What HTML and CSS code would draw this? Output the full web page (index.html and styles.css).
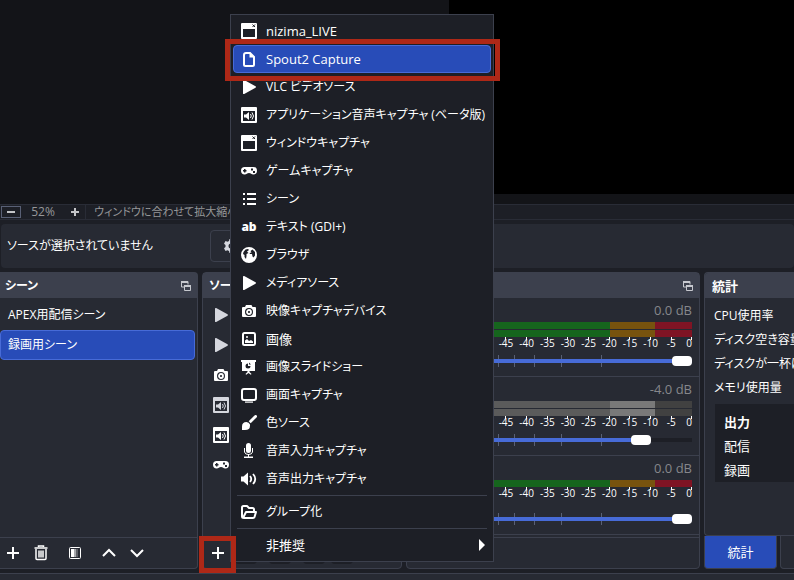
FILE: index.html
```html
<!DOCTYPE html>
<html lang="ja">
<head>
<meta charset="utf-8">
<meta name="viewport" content="width=device-width, initial-scale=1">
<title>OBS</title>
<link rel="stylesheet" href="styles.css">
</head>
<body>
<svg class="sprite" aria-hidden="true">
  <symbol id="window" viewBox="0 0 16 16"><path fill-rule="evenodd" d="M1 0h14a1 1 0 0 1 1 1v14a1 1 0 0 1-1 1H1a1 1 0 0 1-1-1V1a1 1 0 0 1 1-1zM2 6v8h12V6z"/><path d="M11.500 1.500l2.500 2.500M14 1.500l-2.500 2.500" stroke="#1d1f26" fill="none"/></symbol>
  <symbol id="file" viewBox="0 0 16 16"><path d="M5 2h4l4 4v7.500q0 1.500-1.500 1.500h-7Q3 15 3 13.500V4q0-2 2-2z" fill="none" stroke="currentColor" stroke-width="2"/><path d="M8.500 1l5.500 5.500H8.500z"/></symbol>
  <symbol id="play" viewBox="0 0 16 16"><path d="M2 1.800q0-1.200 1.200-.7L14.500 7.300q1 .7 0 1.400L3.200 14.900Q2 15.400 2 14.200z"/></symbol>
  <symbol id="appaudio" viewBox="0 0 16 16"><path fill-rule="evenodd" d="M1 0h14a1 1 0 0 1 1 1v14a1 1 0 0 1-1 1H1a1 1 0 0 1-1-1V1a1 1 0 0 1 1-1zM2 4v10h12V4z"/><path d="M3 7.500h2L8 5v8l-3-2.500H3z"/><path d="M9.500 7q1.500 2 0 4M11 5.500q3 3.500 0 7" fill="none" stroke="currentColor"/></symbol>
  <symbol id="gamepad" viewBox="0 0 16 16"><path fill-rule="evenodd" d="M3.700 4h8.600a3.700 3.700 0 0 1 0 7.400c-2 0-2.300-1.400-4.300-1.400s-2.300 1.400-4.300 1.400a3.700 3.700 0 0 1 0-7.400zM3 6v1H2v1.500h1v1h1.500v-1h1V7h-1V6zM10 5.500v2h2v-2zM12 8v2h2V8z"/></symbol>
  <symbol id="list" viewBox="0 0 16 16"><path d="M2 2h2v2H2zM6 2h9v2H6zM2 7h2v2H2zM6 7h9v2H6zM2 12h2v2H2zM6 12h9v2H6z"/></symbol>
  <symbol id="globe" viewBox="0 0 16 16"><path fill-rule="evenodd" d="M8 0a8 8 0 1 1 0 16A8 8 0 0 1 8 0zM2.500 5l2-2.500 2.500-.5 1 1-2 1.500L7.500 6 5.500 7v2L5 12l-1.500-2V8L2 7zM9.500 4l2-1.500L14 5v3.500l-1.500 2-1-1-.5-2.500L9 7 8.500 6l2-.5z"/></symbol>
  <symbol id="camera" viewBox="0 0 16 16"><path fill-rule="evenodd" d="M5 2h5.500l1 2H14a1 1 0 0 1 1 1v8a1 1 0 0 1-1 1H2a1 1 0 0 1-1-1V5a1 1 0 0 1 1-1h2zM8 5a4 4 0 1 0 0 8 4 4 0 0 0 0-8z"/><circle cx="8" cy="9" r="2" fill="none" stroke="currentColor" stroke-width="1.800"/></symbol>
  <symbol id="image" viewBox="0 0 16 16"><rect x="2" y="2" width="12" height="12" rx="1.500" fill="none" stroke="currentColor" stroke-width="2"/><path d="M4 12V9.500L6 8l2 2 2-1 2 1.500V12z"/><circle cx="6" cy="6" r="1"/></symbol>
  <symbol id="slides" viewBox="0 0 16 16"><path fill-rule="evenodd" d="M0 1h15v2h-1v9H8.500v1l2 2-.7.800L7.500 14l-2.300 1.800-.7-.8 2-2v-1H1V3H0zM7 4.500A2.500 2.500 0 1 0 9.500 7H7z"/><path d="M8 3.500v2h2z" fill="#1d1f26"/></symbol>
  <symbol id="monitor" viewBox="0 0 16 16"><rect x="1" y="2" width="14" height="11" rx="2" fill="none" stroke="currentColor" stroke-width="2"/><path d="M4 14.500h8v1.200H4z"/></symbol>
  <symbol id="brush" viewBox="0 0 16 16"><path d="M15.700.4q.8 1-.2 2.100L9.700 8.300 7.700 6.300 13.500.5q1.200-1 2.200-.1zM5.500 7Q8 7 9 9.500 9.500 15 4 15H1v-3.500Q1 7 5.500 7z"/></symbol>
  <symbol id="mic" viewBox="0 0 16 16"><rect x="5" y="0" width="5" height="10" rx="2.500"/><path d="M3.500 5v4Q4 11.500 7.500 11.500T11.500 9V5M7.500 11v4" fill="none" stroke="currentColor"/><path d="M3 13.500h9V15H3z"/></symbol>
  <symbol id="speaker" viewBox="0 0 16 16"><path d="M0 5.500h2.500L7 1.500v13l-4.500-4H0z"/><path d="M9 5q2.500 3 0 6M12 3q4.500 5 0 10" fill="none" stroke="currentColor" stroke-width="1.800"/></symbol>
  <symbol id="folder" viewBox="0 0 16 16"><path d="M3 14Q1 14 1 12.500V3.500Q1 2 2.500 2H6l2 2h3.500Q13 4 13 5.500V7M2.500 13L5 8h10l-1.500 5q-.3 1-1.500 1H3" fill="none" stroke="currentColor" stroke-width="2" stroke-linejoin="round"/></symbol>
  <symbol id="gear" viewBox="0 0 16 16"><path fill-rule="evenodd" d="M6.500 1h3l.5 2 1.500.8 2-.7 1.500 2.600L13.500 7v2l1.500 1.300-1.500 2.600-2-.7-1.500.8-.5 2h-3L6 13l-1.500-.8-2 .7L1 10.300 2.500 9V7L1 5.700l1.500-2.600 2 .7L6 3zM8 5.500a2.500 2.500 0 1 0 0 5 2.500 2.500 0 0 0 0-5z"/></symbol>
  <symbol id="popout" viewBox="0 0 10 10"><path d="M7 3.500V.5H.5v5.500H3" fill="none" stroke="currentColor"/><path d="M0 0h7v2H0zM3 4h7v2H3z"/><path d="M3.500 5v4.500h6V5" fill="none" stroke="currentColor"/></symbol>
  <symbol id="plus" viewBox="0 0 16 16"><path d="M2 8h12M8 2v12" fill="none" stroke="currentColor" stroke-width="2"/></symbol>
  <symbol id="trash" viewBox="0 0 16 16"><path d="M5.500 2V1h5v1M1.500 3h13M3 4v9.500q0 1 1 1h8q1 0 1-1V4M6 5.500v7M8 5.500v7M10 5.500v7" fill="none" stroke="currentColor" stroke-width="1.500"/></symbol>
  <symbol id="filter" viewBox="0 0 16 16"><rect x="2.500" y="2.500" width="11" height="11" rx="1" fill="none" stroke="currentColor"/><path d="M4 4h3v8H4z"/><path d="M7 4h2v8H7z" opacity=".6"/><path d="M9 4h2v8H9z" opacity=".25"/></symbol>
  <symbol id="up" viewBox="0 0 16 16"><path d="M2 11l6-6 6 6" fill="none" stroke="currentColor" stroke-width="2"/></symbol>
  <symbol id="down" viewBox="0 0 16 16"><path d="M2 5l6 6 6-6" fill="none" stroke="currentColor" stroke-width="2"/></symbol>
</svg>

<main class="preview"><div class="canvas"></div></main>

<div class="zoombar">
  <button class="zoom-out" aria-label="縮小"></button>
  <span class="zoom-value">52%</span>
  <button class="zoom-in" aria-label="拡大"></button>
  <span class="zoom-mode">ウィンドウに合わせて拡大縮小</span>
</div>

<div class="context">
  <span class="context-text kana">ソースが選択されていません</span>
  <button class="context-button" aria-label="プロパティ"><svg class="icon"><use href="#gear"/></svg></button>
</div>

<div class="docks">
  <section class="dock">
    <h2 class="dock-title kana">シーン<svg class="popout"><use href="#popout"/></svg></h2>
    <ul class="list scenes kana">
      <li>APEX用配信シーン</li>
      <li class="selected">録画用シーン</li>
    </ul>
    <div class="toolbar">
      <button aria-label="追加"><svg class="icon"><use href="#plus"/></svg></button>
      <button aria-label="削除"><svg class="icon"><use href="#trash"/></svg></button>
      <button class="apart" aria-label="フィルタ"><svg class="icon"><use href="#filter"/></svg></button>
      <button aria-label="上へ"><svg class="icon"><use href="#up"/></svg></button>
      <button aria-label="下へ"><svg class="icon"><use href="#down"/></svg></button>
    </div>
  </section>

  <section class="dock">
    <h2 class="dock-title kana">ソース</h2>
    <ul class="list sources">
      <li class="dim"><svg class="icon"><use href="#play"/></svg></li>
      <li class="dim"><svg class="icon"><use href="#play"/></svg></li>
      <li><svg class="icon"><use href="#camera"/></svg></li>
      <li class="dim"><svg class="icon"><use href="#appaudio"/></svg></li>
      <li><svg class="icon"><use href="#appaudio"/></svg></li>
      <li><svg class="icon"><use href="#gamepad"/></svg></li>
    </ul>
    <div class="toolbar source-tools">
      <button class="marked" aria-label="追加"><svg class="icon"><use href="#plus"/></svg></button>
      <button disabled aria-label="削除"></button>
      <button disabled class="apart" aria-label="設定"></button>
      <button disabled aria-label="上へ"></button>
      <button disabled aria-label="下へ"></button>
    </div>
  </section>

  <section class="dock">
    <h2 class="dock-title"><svg class="popout"><use href="#popout"/></svg></h2>
    <div class="mixer">
      <div class="strip">
        <div class="level">0.0 dB</div>
        <div class="meter"></div>
        <div class="meter"></div>
        <div class="scale"><span></span><span></span><span></span><span>-45</span><span>-40</span><span>-35</span><span>-30</span><span>-25</span><span>-20</span><span>-15</span><span>-10</span><span>-5</span><span>0</span></div>
        <input class="fader" type="range" aria-label="音量 1" min="0" max="100" value="100" style="--fill:100%">
      </div>
      <div class="strip muted">
        <div class="level">-4.0 dB</div>
        <div class="meter"></div>
        <div class="meter"></div>
        <div class="scale"><span></span><span></span><span></span><span>-45</span><span>-40</span><span>-35</span><span>-30</span><span>-25</span><span>-20</span><span>-15</span><span>-10</span><span>-5</span><span>0</span></div>
        <input class="fader" type="range" aria-label="音量 2" min="0" max="100" value="82" style="--fill:82%">
      </div>
      <div class="strip">
        <div class="level">0.0 dB</div>
        <div class="meter"></div>
        <div class="scale"><span></span><span></span><span></span><span>-45</span><span>-40</span><span>-35</span><span>-30</span><span>-25</span><span>-20</span><span>-15</span><span>-10</span><span>-5</span><span>0</span></div>
        <input class="fader" type="range" aria-label="音量 3" min="0" max="100" value="100" style="--fill:100%">
      </div>
    </div>
    <div class="toolbar"></div>
  </section>

  <div class="side">
    <section class="dock stats">
      <h2 class="dock-title">統計</h2>
      <ul class="facts kana">
        <li>CPU使用率</li>
        <li>ディスク空き容量</li>
        <li>ディスクが一杯になるまで</li>
        <li>メモリ使用量</li>
      </ul>
      <ul class="facts outputs">
        <li><b>出力</b></li>
        <li>配信</li>
        <li>録画</li>
      </ul>
    </section>
    <div class="tabs">
      <button class="tab active">統計</button>
      <button class="tab">チャット</button>
    </div>
  </div>
</div>

<footer class="status"></footer>

<div class="menu" role="menu">
  <button role="menuitem"><svg class="icon"><use href="#window"/></svg>nizima_LIVE</button>
  <button role="menuitem" class="current"><svg class="icon"><use href="#file"/></svg>Spout2 Capture</button>
  <button role="menuitem" class="kana"><svg class="icon"><use href="#play"/></svg>VLC ビデオソース</button>
  <button role="menuitem" class="kana"><svg class="icon"><use href="#appaudio"/></svg>アプリケーション音声キャプチャ (ベータ版)</button>
  <button role="menuitem" class="kana"><svg class="icon"><use href="#window"/></svg>ウィンドウキャプチャ</button>
  <button role="menuitem" class="kana"><svg class="icon"><use href="#gamepad"/></svg>ゲームキャプチャ</button>
  <button role="menuitem" class="kana"><svg class="icon"><use href="#list"/></svg>シーン</button>
  <button role="menuitem" class="kana"><span class="icon ab">ab</span>テキスト (GDI+)</button>
  <button role="menuitem" class="kana"><svg class="icon"><use href="#globe"/></svg>ブラウザ</button>
  <button role="menuitem" class="kana"><svg class="icon"><use href="#play"/></svg>メディアソース</button>
  <button role="menuitem" class="kana"><svg class="icon"><use href="#camera"/></svg>映像キャプチャデバイス</button>
  <button role="menuitem"><svg class="icon"><use href="#image"/></svg>画像</button>
  <button role="menuitem" class="kana"><svg class="icon"><use href="#slides"/></svg>画像スライドショー</button>
  <button role="menuitem" class="kana"><svg class="icon"><use href="#monitor"/></svg>画面キャプチャ</button>
  <button role="menuitem" class="kana"><svg class="icon"><use href="#brush"/></svg>色ソース</button>
  <button role="menuitem" class="kana"><svg class="icon"><use href="#mic"/></svg>音声入力キャプチャ</button>
  <button role="menuitem" class="kana"><svg class="icon"><use href="#speaker"/></svg>音声出力キャプチャ</button>
  <hr>
  <button role="menuitem" class="kana"><svg class="icon"><use href="#folder"/></svg>グループ化</button>
  <hr>
  <button role="menuitem" class="submenu"><span class="icon"></span>非推奨</button>
</div>
</body>
</html>
```
FILE: styles.css
```css
:root {
  --window: #1d1f26;
  --panel: #272a33;
  --line: #3c404d;
  --blue: #284cb8;
  --blue-line: #476bd7;
  --mark: #ae2817;
}

* { box-sizing: border-box; }

body {
  margin: 0;
  min-height: 100vh;
  display: flex;
  flex-direction: column;
  overflow: hidden;
  position: relative;
  background: var(--window);
  color: #fff;
  font: 13px/18px "Open Sans", "Noto Sans CJK JP", sans-serif;
  font-feature-settings: "palt";
  white-space: nowrap;
}

button {
  font: inherit;
  font-feature-settings: inherit;
  color: inherit;
  padding: 0;
  border: 0;
  background: none;
}

ul { list-style: none; margin: 0; padding: 0; }

.sprite { display: none; }

.icon {
  width: 16px;
  height: 16px;
  flex: none;
  fill: currentColor;
}

/* Preview and zoom bar */
.preview {
  flex: 1;
  display: grid;
  grid-template-columns: 449fr 345fr;
  padding-bottom: 10px;
  background: #131418;
}
.canvas { grid-column: 2; background: #000; }

.zoombar {
  display: flex;
  align-items: center;
  height: 16px;
  border: solid #292c36;
  border-width: 1px 0;
  color: #969799;
  font-size: 12px;
  line-height: 14px;
}
.zoom-out, .zoom-in { display: grid; place-items: center; width: 20px; height: 12px; }
.zoom-out { border: 1px solid #596075; margin-left: 1px; }
.zoom-out::before, .zoom-in::before {
  content: "";
  width: 8px;
  height: 8px;
  background: linear-gradient(#c4c5c8, #c4c5c8) center / 8px 2px no-repeat;
}
.zoom-in::before {
  background:
    linear-gradient(#c4c5c8, #c4c5c8) center / 8px 2px no-repeat,
    linear-gradient(#c4c5c8, #c4c5c8) center / 2px 8px no-repeat;
}
.zoom-value { width: 44px; text-align: center; }
.zoom-mode { padding-left: 8px; border-left: 1px solid #292c36; font-size: 11px; }

/* Context bar */
.context {
  display: flex;
  align-items: center;
  height: 44px;
  margin: 4px 0 4px 1px;
  padding-left: 6px;
  border-radius: 4px;
  background: var(--panel);
}
.context-text { width: 203px; }
.context-button {
  width: 100px;
  height: 32px;
  padding-left: 12px;
  text-align: left;
  color: #d5d7de;
  border: 1px solid var(--line);
  border-radius: 4px;
}
.context-button .icon { display: block; }

/* Docks */
.docks {
  display: grid;
  grid-template-columns: minmax(0, 198fr) minmax(0, 200fr) minmax(0, 294fr) minmax(0, 90fr);
  gap: 4px;
  height: 297px;
}
.dock {
  display: flex;
  flex-direction: column;
  border: 1px solid var(--line);
  border-radius: 4px;
  background: var(--panel);
}
.dock-title {
  display: flex;
  align-items: center;
  height: 25px;
  margin: 0;
  padding: 0 6px;
  background: var(--line);
  font-size: 13px;
  font-weight: 600;
}
.popout { width: 10px; height: 10px; margin-left: auto; fill: #c6c8ce; color: #c6c8ce; }

.docks > .dock:first-child { border-left: 0; border-radius: 0 4px 4px 0; }
.docks > .dock:first-child .dock-title { padding-left: 5px; }

.list { flex: 1; padding-top: 2px; }
.list li { display: flex; align-items: center; height: 30px; }
.scenes li { padding-left: 7px; margin-right: 2px; border: 1px solid transparent; }
.scenes .selected { background: var(--blue); border-color: var(--blue-line); border-radius: 4px; }
.sources li { padding-left: 10px; }
.dim { color: #d5d7de; }

.toolbar {
  display: flex;
  align-items: center;
  gap: 6px;
  height: 31px;
  padding-left: 2px;
  border-top: 1px solid var(--line);
}
.source-tools { padding-left: 4px; }
.toolbar button { display: grid; place-items: center; width: 22px; height: 22px; border-radius: 4px; }
.toolbar .apart { margin: 0 6px; }
.toolbar button:disabled { background: var(--window); }
.toolbar .marked { position: relative; z-index: 3; }
.marked::after {
  content: "";
  position: absolute;
  inset: -6px -7px -9px -8px;
  border: 5px solid var(--mark);
}

/* Mixer */
.mixer { flex: 1; }
.strip {
  display: flex;
  flex-direction: column;
  height: 79px;
  padding: 3px 7px 9px 37px;
  border-bottom: 1px solid var(--line);
}
.level { height: 20px; margin-bottom: 1px; text-align: right; color: #86878b; }
.meter {
  height: 7px;
  background: linear-gradient(90deg, #16651d 67%, #77530e 67% 85%, #7f1424 85%);
}
.meter + .meter { margin-top: 1px; }
.muted .meter { background: linear-gradient(90deg, #5b5b5b 67%, #797979 67% 85%, #414141 85%); }
.scale {
  display: grid;
  grid-template-columns: 1fr repeat(11, 2fr) 1fr;
  font-size: 10px;
  line-height: 12px;
  text-align: center;
}
.scale span {
  height: 12px;
  background: linear-gradient(#fff, #fff) top / 1px 3px no-repeat;
}
.scale span:last-child { text-align: right; background-position: right top; }
.fader {
  appearance: none;
  width: 100%;
  height: 12px;
  margin: auto 0 0;
  background:
    linear-gradient(90deg, var(--blue-line) var(--fill), var(--window) 0) center / 100% 4px no-repeat,
    linear-gradient(#596075, #596075) right 90px top / 1px 12px no-repeat,
    linear-gradient(#596075, #596075) right 130px top / 1px 12px no-repeat,
    linear-gradient(#596075, #596075) right 157px top / 1px 12px no-repeat,
    linear-gradient(#596075, #596075) right 177px top / 1px 12px no-repeat,
    linear-gradient(#596075, #596075) right 193px top / 1px 12px no-repeat;
}
.fader::-webkit-slider-thumb {
  appearance: none;
  width: 20px;
  height: 10px;
  border-radius: 4px;
  background: #fff;
}

/* Statistics */
.side { display: flex; flex-direction: column; }
.stats { flex: 1; border-right: 0; border-radius: 4px 0 0 4px; overflow: hidden; }
.stats .dock-title { padding-left: 7px; flex: none; }
.facts { padding: 6px 0 0 9px; }
.facts li { line-height: 24px; }
.outputs { margin: 4px 0 0 10px; padding: 6px 0 0 9px; background: var(--window); height: 78px; }
.tabs { display: flex; gap: 3px; overflow: hidden; height: 33px; }
.tab {
  flex: none;
  min-width: 73px;
  padding: 0 12px;
  border: 1px solid var(--line);
  border-top: 0;
  border-radius: 0 0 4px 4px;
  background: var(--panel);
}
.tab.active { background: var(--blue); }

.status { height: 7px; margin-top: 4px; border-top: 1px solid var(--line); background: var(--panel); }

/* Add-source menu */
.menu {
  position: absolute;
  left: 230px;
  top: 14px;
  z-index: 2;
  width: 264px;
  padding: 2px;
  border: 1px solid var(--line);
  background: var(--window);
}
.menu button {
  display: flex;
  align-items: center;
  gap: 9px;
  width: 100%;
  height: 28px;
  padding: 0 5px 0 7px;
  border: 1px solid transparent;
  border-radius: 4px;
}
.menu hr { margin: 2px 4px; border: 0; border-top: 1px solid var(--line); }
.menu .current { position: relative; background: var(--blue); border-color: var(--blue-line); }
.current::after {
  content: "";
  position: absolute;
  inset: -7px -10px -9px -9px;
  border: 5px solid var(--mark);
}
.ab { font-weight: 800; font-size: 12px; line-height: 15px; }
.submenu::after {
  content: "";
  margin-left: auto;
  border: solid transparent;
  border-width: 6px 0 6px 6px;
  border-left-color: #fff;
}

/* Long kana labels are set one step smaller than Latin ones */
.kana, .menu .kana { font-size: 12px; }
```
